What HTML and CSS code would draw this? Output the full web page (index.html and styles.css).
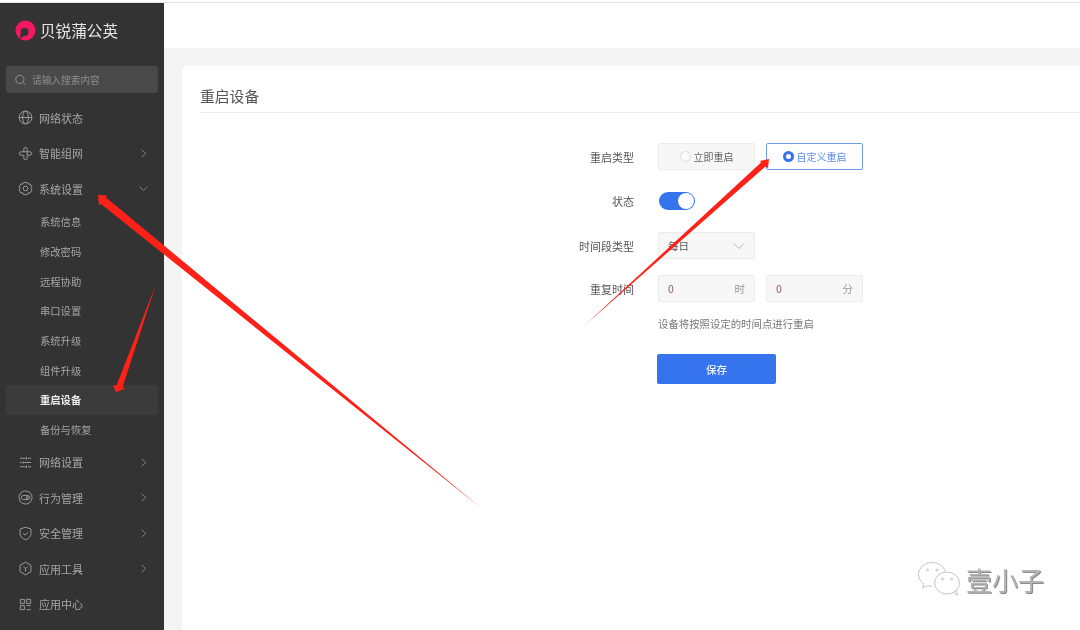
FILE: index.html
```html
<!DOCTYPE html>
<html lang="zh-CN">
<head>
<meta charset="utf-8">
<title>重启设备</title>
<link rel="stylesheet" href="styles.css">
</head>
<body>
<div class="app">
  <aside class="sidebar">
    <div class="brand">
      <svg class="brand-logo" viewBox="0 0 22 22"><circle cx="11" cy="11" r="10.500" fill="#f4195f"/><circle cx="10" cy="12.500" r="4.200" fill="#333"/><path d="M6.500 14l-1.500 4 2 .8 2.500-2.800z" fill="#333"/></svg>
      <span class="brand-name">贝锐蒲公英</span>
    </div>
    <div class="search">
      <svg class="search-icon" viewBox="0 0 12 12"><circle cx="5.300" cy="5.300" r="4.500"/><path d="M8.600 8.600l2.600 2.600"/></svg>
      <span>请输入搜索内容</span>
    </div>
    <nav class="menu">
      <div class="item">
        <svg class="icon" viewBox="0 0 16 16"><circle cx="8" cy="8" r="6.800"/><ellipse cx="8" cy="8" rx="3" ry="6.800"/><path d="M1.200 8h13.600"/></svg>
        <span>网络状态</span>
      </div>
      <div class="item">
        <svg class="icon" viewBox="0 0 16 16"><path d="M6.200 6.200V3.200a1.800 1.800 0 0 1 3.600 0v3h3a1.800 1.800 0 0 1 0 3.600h-3v3.100a1.800 1.800 0 0 1-3.600 0V9.800h-3a1.800 1.800 0 0 1 0-3.600z"/><path d="M6.200 6.200h3.600v3.600"/></svg>
        <span>智能组网</span>
        <svg class="chev" viewBox="0 0 10 10"><path d="M3 .8l4.200 4.200L3 9.200"/></svg>
      </div>
      <div class="item">
        <svg class="icon" viewBox="0 0 16 16"><path d="M6 1.500L10 1.500L10.800 3.300L12.900 3.100L14.900 6.500L13.700 8L14.900 9.500L12.900 12.900L10.800 12.700L10 14.500L6 14.500L5.200 12.700L3.100 12.900L1.100 9.500L2.300 8L1.100 6.500L3.100 3.100L5.200 3.300Z" stroke-linejoin="round"/><circle cx="8" cy="8" r="2.500"/></svg>
        <span>系统设置</span>
        <svg class="chev" viewBox="0 0 10 10"><path d="M.8 3l4.200 4.200L9.200 3"/></svg>
      </div>
      <div class="sub">系统信息</div>
      <div class="sub">修改密码</div>
      <div class="sub">远程协助</div>
      <div class="sub">串口设置</div>
      <div class="sub">系统升级</div>
      <div class="sub">组件升级</div>
      <div class="sub active">重启设备</div>
      <div class="sub">备份与恢复</div>
      <div class="item">
        <svg class="icon" viewBox="0 0 16 16"><path d="M2 3.500h6M10.500 3.500H14M2 8h2M6.500 8H14M2 12.500h6M10.500 12.500H14M9 2v3M5.500 6.500v3M9 11v3"/></svg>
        <span>网络设置</span>
        <svg class="chev" viewBox="0 0 10 10"><path d="M3 .8l4.200 4.200L3 9.200"/></svg>
      </div>
      <div class="item">
        <svg class="icon" viewBox="0 0 16 16"><circle cx="8" cy="8" r="7"/><rect x="3.500" y="5.800" width="9" height="4.400" rx="2.200"/><circle cx="9.800" cy="8" r="1.100"/></svg>
        <span>行为管理</span>
        <svg class="chev" viewBox="0 0 10 10"><path d="M3 .8l4.200 4.200L3 9.200"/></svg>
      </div>
      <div class="item">
        <svg class="icon" viewBox="0 0 16 16"><path d="M8 1.300l5.800 1.900v5c0 3.200-2.500 5.300-5.800 6.500-3.300-1.200-5.800-3.300-5.800-6.500v-5z" stroke-linejoin="round"/><path d="M5.500 7.800l2 1.900 3.200-3"/></svg>
        <span>安全管理</span>
        <svg class="chev" viewBox="0 0 10 10"><path d="M3 .8l4.200 4.200L3 9.200"/></svg>
      </div>
      <div class="item">
        <svg class="icon" viewBox="0 0 16 16"><path d="M8 1.200l5.800 3.400v6.800L8 14.800l-5.800-3.400V4.600z" stroke-linejoin="round"/><path d="M5.800 6l2.200 2.200L10.200 6M8 8.200v3"/></svg>
        <span>应用工具</span>
        <svg class="chev" viewBox="0 0 10 10"><path d="M3 .8l4.200 4.200L3 9.200"/></svg>
      </div>
      <div class="item">
        <svg class="icon" viewBox="0 0 16 16"><path d="M2.500 2.500h4.300v4.300H2.500zM9.200 2.500h4.300v4.300H9.200zM2.500 9.200h4.300v4.300H2.500zM9.200 9.200h4.300M9.200 13.500h4.300"/></svg>
        <span>应用中心</span>
      </div>
    </nav>
  </aside>

  <main class="main">
    <header class="topbar"></header>
    <div class="content">
      <section class="card">
        <h1 class="title">重启设备</h1>
        <form class="form">
          <div class="row">
            <label class="label">重启类型</label>
            <div class="controls">
              <div class="choice"><i class="radio"></i>立即重启</div>
              <div class="choice selected"><i class="radio on"></i>自定义重启</div>
            </div>
          </div>
          <div class="row">
            <label class="label">状态</label>
            <div class="controls"><div class="switch"><i class="knob"></i></div></div>
          </div>
          <div class="row">
            <label class="label">时间段类型</label>
            <div class="controls">
              <div class="field select"><span class="value">每日</span>
                <svg class="select-chev" viewBox="0 0 12 8"><path d="M1 1.500l5 5 5-5"/></svg>
              </div>
            </div>
          </div>
          <div class="row row-time">
            <label class="label">重复时间</label>
            <div class="controls">
              <div class="field"><span class="num">0</span><span class="unit">时</span></div>
              <div class="field"><span class="num">0</span><span class="unit">分</span></div>
            </div>
          </div>
          <div class="hint">设备将按照设定的时间点进行重启</div>
          <button type="button" class="save">保存</button>
        </form>
      </section>
    </div>
  </main>
</div>

<svg class="arrows" viewBox="0 0 1080 630">
  <polygon points="98,195 107,195.500 106,197.500 481,508 101,204 99,205"/>
  <polygon points="156,284 122.500,387.500 125.500,388 116,392.500 113,385 116.500,385.500"/>
  <polygon points="585,325 761,162.500 760,161 769,159 768,168 765.500,166.500"/>
</svg>

<div class="watermark">
  <svg class="wechat" viewBox="0 0 44 38"><path d="M15 1.500C7.500 1.500 1.500 7 1.500 13.500c0 4 2.200 7.400 5.500 9.600L5.500 27l5-2.400c1.400.4 3 .6 4.500.6" /><path d="M15 1.500c6.500 0 12 4 13.300 9.200"/><ellipse cx="30" cy="22" rx="12.500" ry="11"/><path d="M36 31l4.500 3.500-1-6"/><circle cx="10.500" cy="9" r="1"/><circle cx="20" cy="9" r="1"/><circle cx="25.500" cy="18" r="1"/><circle cx="34.500" cy="18" r="1"/></svg>
  <span class="wm-text">壹小子</span>
</div>
</body>
</html>
```
FILE: styles.css
```css
* { box-sizing: border-box; }
html, body { margin: 0; padding: 0; height: 100%; overflow: hidden; }
body {
  position: relative;
  background: #fff;
  font-family: "Noto Sans CJK SC", "Noto Sans", sans-serif;
}
.app {
  display: flex;
  height: 630px;
  border-top: 1px solid #e4e4e4;
  margin-top: 2px;
  filter: blur(.35px);
}
.sidebar {
  width: 164px;
  flex: none;
  background: #333;
  display: flex;
  flex-direction: column;
  padding: 0 6px;
}
.brand { height: 63px; display: flex; align-items: center; padding: 0 0 9px 9px; gap: 4px; flex: none; }
.brand-logo { width: 21px; height: 21px; }
.brand-name { color: #e6e6e6; font-size: 15.600px; }
.search {
  height: 27px;
  background: #494949;
  border-radius: 3px;
  display: flex;
  align-items: center;
  padding-left: 9px;
  gap: 6px;
  color: #8f8f8f;
  font-size: 9.700px;
  flex: none;
}
.search-icon { width: 11px; height: 12px; fill: none; stroke: #999; stroke-width: 1; }
.menu { display: flex; flex-direction: column; margin-top: 7px; }
.item {
  height: 35.600px;
  display: flex;
  align-items: center;
  padding-left: 12px;
  gap: 6px;
  color: #a6a6a6;
  font-size: 11px;
}
.icon { width: 15px; height: 15px; fill: none; stroke: #a0a0a0; stroke-width: 1; flex: none; }
.chev { width: 9px; height: 9px; margin-left: auto; margin-right: 10px; fill: none; stroke: #8a8a8a; stroke-width: 1; }
.sub {
  height: 29.700px;
  display: flex;
  align-items: center;
  padding-left: 34px;
  color: #a6a6a6;
  font-size: 10.300px;
}
.sub.active { background: #3b3b3b; border-radius: 3px; color: #eee; font-weight: 700; }
.main { flex: 1; min-width: 0; display: flex; flex-direction: column; background: #f4f4f4; }
.topbar { height: 45px; background: #fff; flex: none; }
.content { flex: 1; padding: 18px 0 0 18px; }
.card { background: #fff; height: 100%; border-radius: 5px 0 0 0; padding-left: 18px; }
.title {
  margin: 0;
  height: 47px;
  padding-top: 19px;
  border-bottom: 1px solid #ececec;
  color: #555;
  font-size: 14.800px;
  font-weight: 400;
  line-height: 22px;
}
.form {
  display: flex;
  flex-direction: column;
  align-items: flex-start;
  margin: 30px 0 0 364px;
}
.row { display: flex; align-items: center; gap: 24px; }
.row + .row { margin-top: 22px; }
.row + .row-time { margin-top: 16px; }
.label { width: 70px; text-align: right; color: #555; font-size: 11px; }
.controls { display: flex; gap: 11px; align-items: center; }
.choice {
  width: 97px;
  height: 27px;
  display: flex;
  align-items: center;
  justify-content: center;
  gap: 3px;
  background: #f7f7f7;
  border: 1px solid #ececec;
  border-radius: 2px;
  color: #666;
  font-size: 10px;
}
.choice.selected { background: #fff; border-color: #6f9bee; color: #5d8fee; }
.radio { width: 11px; height: 11px; border-radius: 50%; border: 1px solid #ddd; background: #fafafa; }
.radio.on { border: 3px solid #3574ec; background: #fff; }
.switch { width: 36px; height: 18px; margin-left: 1px; border-radius: 9px; background: #3574ec; display: flex; align-items: center; justify-content: flex-end; padding-right: 1px; }
.knob { width: 16px; height: 16px; border-radius: 50%; background: #fff; }
.field {
  width: 97px;
  height: 27px;
  background: #f7f7f7;
  border: 1px solid #ececec;
  border-radius: 2px;
  display: flex;
  align-items: center;
  justify-content: space-between;
  padding: 0 9px;
  font-size: 10.500px;
}
.value { color: #555; }
.num { color: #8b5a5a; }
.unit { color: #999; }
.select-chev { width: 12px; height: 8px; fill: none; stroke: #b5b5b5; stroke-width: 1; }
.hint { margin: 15px 0 0 94px; color: #777; font-size: 10.400px; line-height: 14px; }
.save {
  display: block;
  margin: 23px 0 0 93px;
  width: 119px;
  height: 30px;
  border: 0;
  border-radius: 2px;
  background: #3574ec;
  color: #eef3fd;
  font: 500 10.500px "Noto Sans CJK SC", sans-serif;
}
.arrows { position: absolute; left: 0; top: 0; width: 1080px; height: 630px; pointer-events: none; }
.arrows polygon { fill: #ff2018; }
.watermark { position: absolute; left: 917px; top: 561px; display: flex; align-items: center; gap: 5px; filter: blur(.4px); }
.wechat { width: 44px; height: 38px; fill: none; stroke: #c4c4c4; stroke-width: 1; }
.wm-text { color: #b4b4b4; font-size: 26px; line-height: 38px; text-shadow: 1px 1px 0 #8a8a8a; }
```
